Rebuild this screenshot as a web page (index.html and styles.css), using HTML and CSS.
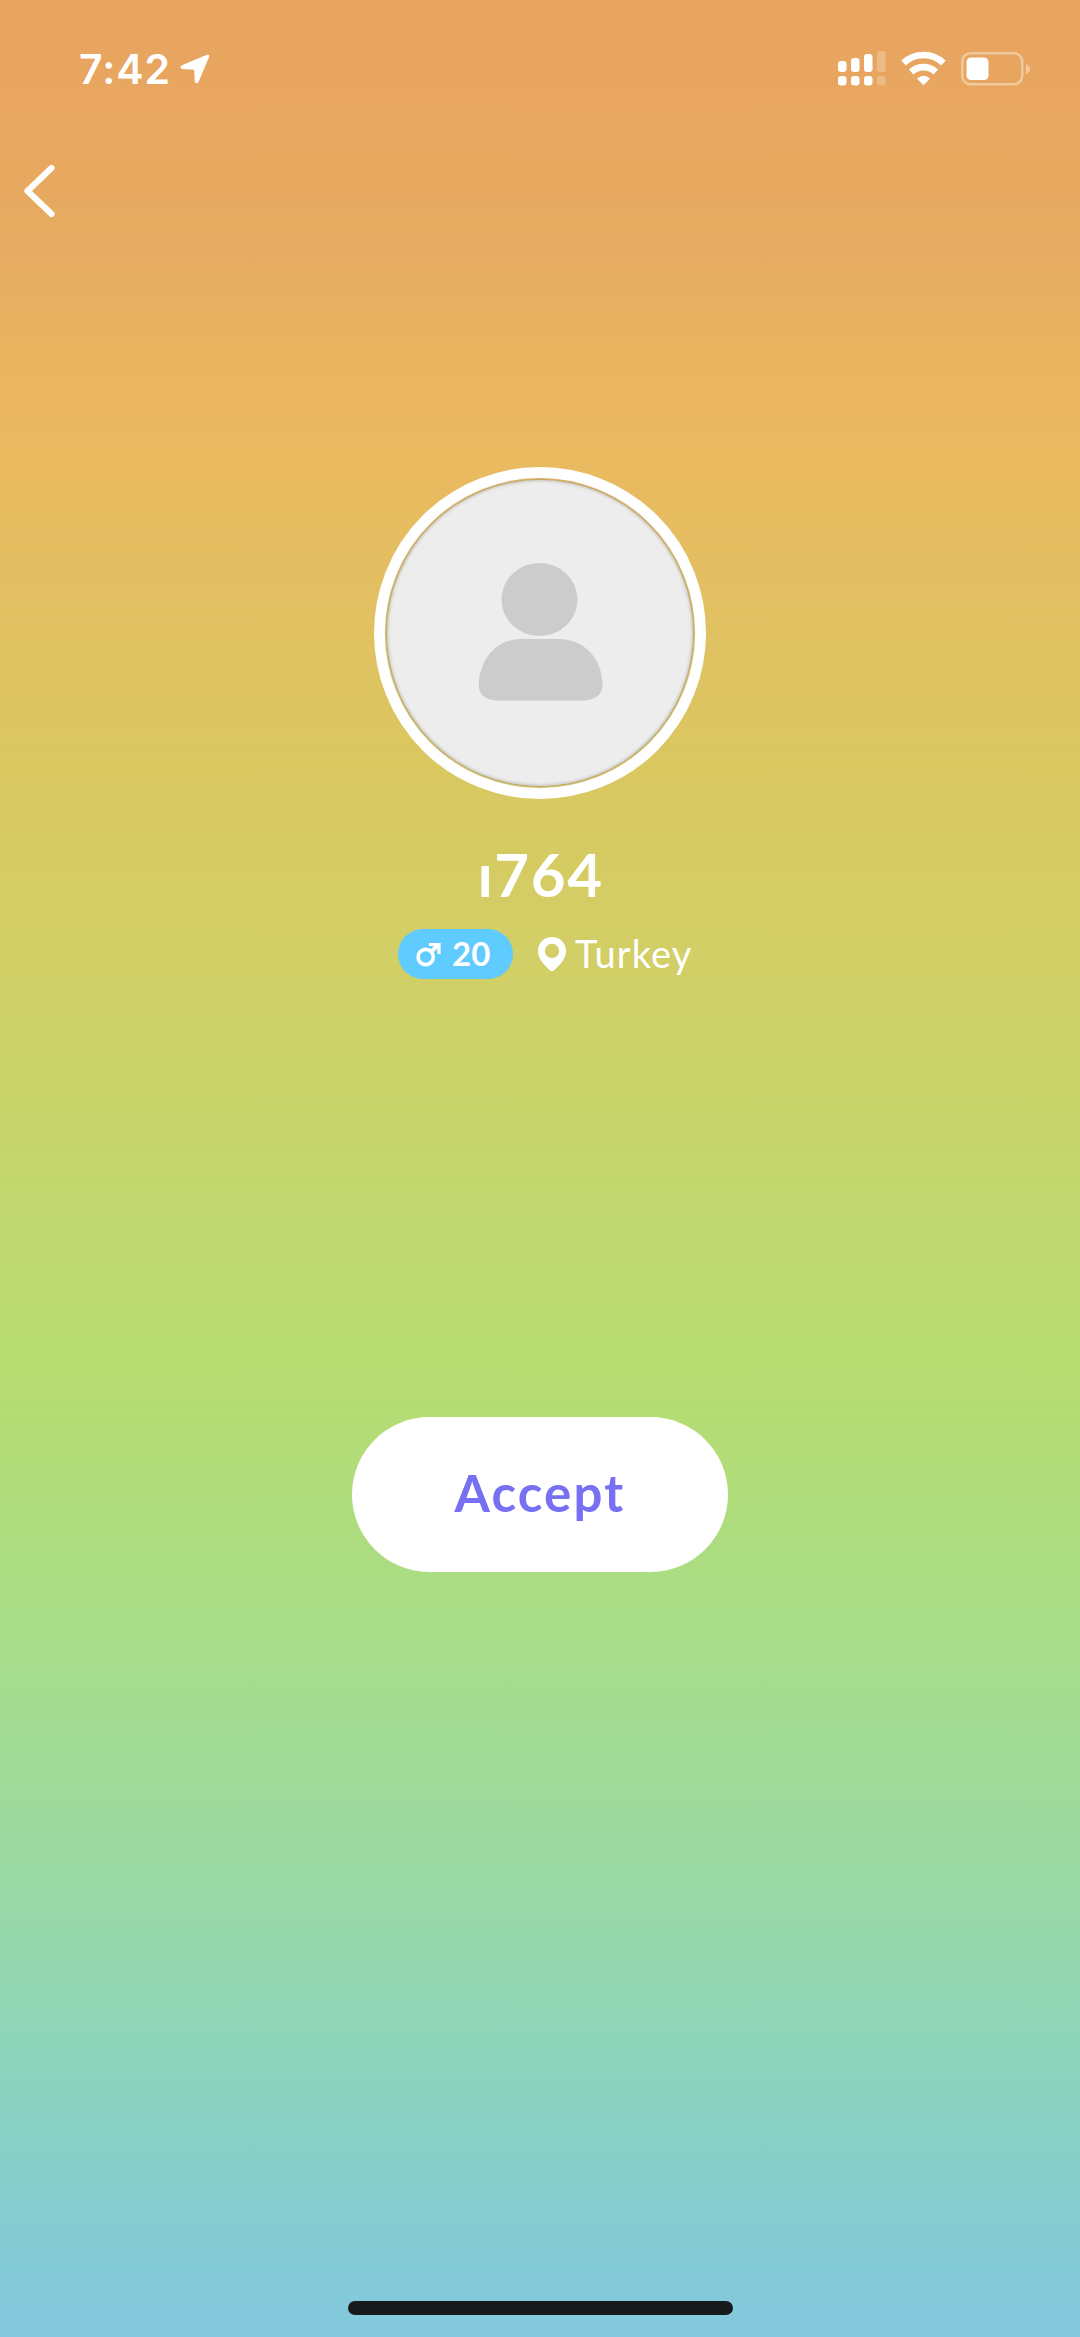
FILE: index.html
```html
<!DOCTYPE html>
<html lang="en">
<head>
<meta charset="utf-8">
<title>Incoming request</title>
<link rel="stylesheet" href="styles.css">
</head>
<body>
<div class="screen">
  <header class="status">
    <div class="status-left">
      <span class="time">7:42</span>
      <svg class="arrow" width="30" height="30" viewBox="0 0 30 30"><path d="M27 .8 Q29.800 0 29 3 L18.500 28 Q16.600 30.500 14.800 28 L14.200 15.800 L2 15 Q-1 13.500 2 11.200 Z"/></svg>
    </div>
    <div class="status-right">
      <svg class="signal" width="48" height="36" viewBox="0 0 48 36">
        <rect x="0" y="10" width="8.5" height="11" rx="3"/><rect x="13" y="7" width="8.5" height="14" rx="3"/><rect x="26" y="3" width="8.5" height="18" rx="3"/>
        <rect x="0" y="25" width="8.5" height="9.5" rx="3"/><rect x="13" y="25" width="8.5" height="9.5" rx="3"/><rect x="26" y="25" width="8.5" height="9.5" rx="3"/>
        <g opacity=".23"><rect x="39" y="0" width="8.5" height="21" rx="2.5"/><rect x="39" y="25" width="8.5" height="9.5" rx="3"/></g>
      </svg>
      <svg class="wifi" width="46" height="36" viewBox="0 0 46 36">
        <g class="line" stroke-width="6.6"><path d="M2.500 12 A29 29 0 0 1 42.500 12"/><path d="M10.200 21 A18 18 0 0 1 34.800 21"/></g>
        <path d="M16 27.500 Q22.500 22 29 27.500 L23.300 33.500 Q22.500 34.200 21.700 33.500 Z"/>
      </svg>
      <svg class="battery" width="70" height="34" viewBox="0 0 70 34">
        <rect class="line" x="1.250" y="1.250" width="60" height="31" rx="8.500" stroke-width="2.500" opacity=".4"/>
        <rect x="5.500" y="5.500" width="22" height="22.500" rx="4.500"/>
        <path opacity=".4" d="M65 12 Q69 13.500 69 17 Q69 20.500 65 22 Z"/>
      </svg>
    </div>
  </header>
  <nav class="nav">
    <svg width="36" height="56" viewBox="0 0 36 56"><path class="line" d="M28.500 5 L4.500 28 L28.500 51" stroke-width="6.200" stroke-linecap="round" stroke-linejoin="round"/></svg>
  </nav>
  <main class="profile">
    <div class="avatar">
      <div class="disc">
        <svg width="126" height="142" viewBox="0 0 126 142"><ellipse cx="61.500" cy="37.500" rx="38" ry="36.500"/><path d="M44 77 H80 C108 77 124 98 124.500 122 Q125 138 104 138.500 H21 Q0 138 .8 122 C2 98 17 77 44 77 Z"/></svg>
      </div>
    </div>
    <h1 class="name">ı764</h1>
    <div class="meta">
      <div class="badge">
        <svg width="26" height="26" viewBox="0 0 26 26"><g class="line"><circle cx="9.700" cy="16" r="7.600" stroke-width="3.600"/><path d="M15.500 10.500 L21.500 4.500" stroke-width="4"/><path d="M13 3.500 H23 V13" stroke-width="3.200"/></g></svg>
        <span class="age">20</span>
      </div>
      <div class="place">
        <svg width="28" height="35" viewBox="0 0 28 35"><path fill-rule="evenodd" d="M14 0 C22 0 28 6 28 14 C28 22.500 20.500 29 16.300 33.200 Q14 35.400 11.700 33.200 C7.500 29 0 22.500 0 14 C0 6 6 0 14 0 Z M14 6.800 A7.200 7.200 0 1 0 14 21.200 A7.200 7.200 0 1 0 14 6.800 Z"/></svg>
        <span class="country">Turkey</span>
      </div>
    </div>
  </main>
  <button class="accept">Accept</button>
  <div class="home"></div>
</div>
</body>
</html>
```
FILE: styles.css
```css
* { box-sizing: border-box; }
body { margin: 0; }
svg { display: block; fill: #fff; }
.line { fill: none; stroke: #fff; }
.screen {
  width: 1080px;
  height: 2337px;
  display: flex;
  flex-direction: column;
  align-items: center;
  color: #fff;
  font-family: Lato, "Noto Sans", sans-serif;
  background: linear-gradient(180deg,
    #e8a460 0, #e8a75f 160px, #e6ad63 270px, #eab45f 360px, #eaba60 470px,
    #e2bf62 590px, #dac760 760px, #d1cf66 960px, #c7d46a 1110px, #bfd972 1260px,
    #b9dd71 1340px, #b3dc76 1440px, #aadd84 1590px, #a2db93 1730px,
    #99d8a5 1890px, #8fd5b8 2030px, #86cfca 2170px, #83cad8 2270px, #85c8df 2337px);
}
.status {
  width: 100%;
  height: 140px;
  padding: 0 49px 2px 79px;
  display: flex;
  justify-content: space-between;
  align-items: center;
}
.status-left { display: flex; align-items: center; gap: 6px; }
.time {
  font: 600 41px/48px Inter, sans-serif;
  width: 95px;
  letter-spacing: 1px;
}
.status-right { display: flex; align-items: center; }
.wifi { margin-left: 15px; }
.battery { margin-left: 14px; }
.nav { width: 100%; height: 327px; padding: 23px 23px 0; }
.profile { display: flex; flex-direction: column; align-items: center; }
.avatar {
  width: 332px;
  height: 332px;
  border: 11px solid #fff;
  border-radius: 50%;
  display: flex;
  align-items: center;
  justify-content: center;
}
.disc {
  width: 306px;
  height: 306px;
  border-radius: 50%;
  background: #ededed;
  box-shadow: 0 0 2px 1px rgba(160, 150, 130, .7), inset 0 0 3px 1px #c8c4bb;
  padding: 82px 0 0 91px;
}
.disc svg { fill: #ccc; }
.name {
  margin: 39px 0 0;
  padding-left: 1px;
  font-size: 60px;
  line-height: 72px;
  font-weight: 700;
  letter-spacing: 1.6px;
}
.meta {
  margin-top: 19px;
  height: 50px;
  display: flex;
  align-items: center;
  gap: 25px;
  padding-left: 12px;
}
.badge {
  width: 115px;
  height: 50px;
  padding-left: 18px;
  border-radius: 25px;
  background: #5fcbff;
  display: flex;
  align-items: center;
  gap: 10px;
}
.age {
  font-size: 33px;
  line-height: 40px;
  font-weight: 700;
  padding-bottom: 3px;
}
.place { display: flex; align-items: center; gap: 9px; }
.country {
  font-size: 38px;
  line-height: 46px;
  width: 119px;
  padding-bottom: 2px;
  letter-spacing: 1.1px;
}
.accept {
  margin: 438px 0 0;
  width: 376px;
  height: 155px;
  padding: 0 0 4px;
  border: 0;
  border-radius: 78px;
  background: #fff;
  color: #7770f2;
  font: 700 51px/60px Lato, sans-serif;
  letter-spacing: 2.2px;
}
.home {
  width: 385px;
  height: 14px;
  margin: auto 0 22px;
  border-radius: 7px;
  background: #161a1a;
}
```
